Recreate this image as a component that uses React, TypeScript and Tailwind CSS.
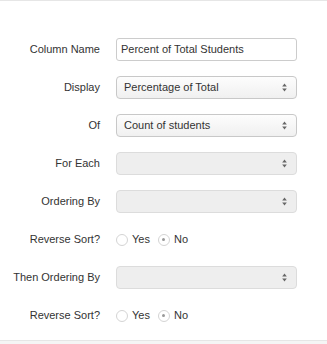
import React from "react";

const Arrows = () => (
  <svg width="5" height="9" viewBox="0 0 5 9" className="shrink-0">
    <path d="M2.5 0.5 L4.8 3.6 L0.2 3.6 Z" fill="#666" />
    <path d="M2.5 8.5 L4.8 5.4 L0.2 5.4 Z" fill="#666" />
  </svg>
);

const Select = ({ value, disabled }: { value?: string; disabled?: boolean }) => (
  <div
    className={
      "flex h-[23px] w-[181px] items-center justify-between rounded-[4px] border pl-[7px] pr-[9px] " +
      (disabled
        ? "border-[#dcdcdc] bg-[#eeeeee]"
        : "border-[#c8c8c8] bg-gradient-to-b from-[#fdfdfd] to-[#f0f0f0]")
    }
  >
    <span className="text-[11px] text-[#333]">{value ?? ""}</span>
    <Arrows />
  </div>
);

const Radio = ({ checked }: { checked?: boolean }) => (
  <span className="flex h-[12px] w-[12px] items-center justify-center rounded-full border border-[#d4d4d4] bg-white">
    {checked && <span className="h-[3px] w-[3px] rounded-full bg-[#999]" />}
  </span>
);

const RadioRow = () => (
  <div className="flex items-center text-[11px] text-[#333]">
    <Radio />
    <span className="ml-[4px]">Yes</span>
    <span className="ml-[8px]">
      <Radio checked />
    </span>
    <span className="ml-[4px]">No</span>
  </div>
);

const Row = ({ label, children }: { label: string; children: React.ReactNode }) => (
  <div className="flex h-[23px] items-center">
    <div className="w-[100px] shrink-0 text-right text-[11px] text-[#333]">{label}</div>
    <div className="ml-[16px]">{children}</div>
  </div>
);

export default function App() {
  return (
    <div
      className="flex h-[344px] w-[327px] flex-col bg-white"
      style={{ fontFamily: '"Liberation Sans", Arial, sans-serif' }}
    >
      <div className="h-[1px] bg-[#e6e6e6]" />
      <div className="flex flex-1 flex-col gap-[15px] pt-[37px]">
        <Row label="Column Name">
          <div className="flex h-[23px] w-[181px] items-center rounded-[3px] border border-[#cccccc] bg-white pl-[4px]">
            <span className="text-[11px] text-[#333]">Percent of Total Students</span>
          </div>
        </Row>
        <Row label="Display">
          <Select value="Percentage of Total" />
        </Row>
        <Row label="Of">
          <Select value="Count of students" />
        </Row>
        <Row label="For Each">
          <Select disabled />
        </Row>
        <Row label="Ordering By">
          <Select disabled />
        </Row>
        <Row label="Reverse Sort?">
          <RadioRow />
        </Row>
        <Row label="Then Ordering By">
          <Select disabled />
        </Row>
        <Row label="Reverse Sort?">
          <RadioRow />
        </Row>
      </div>
      <div className="h-[4px] border-t border-[#e6e6e6] bg-[#f5f5f5]" />
    </div>
  );
}
